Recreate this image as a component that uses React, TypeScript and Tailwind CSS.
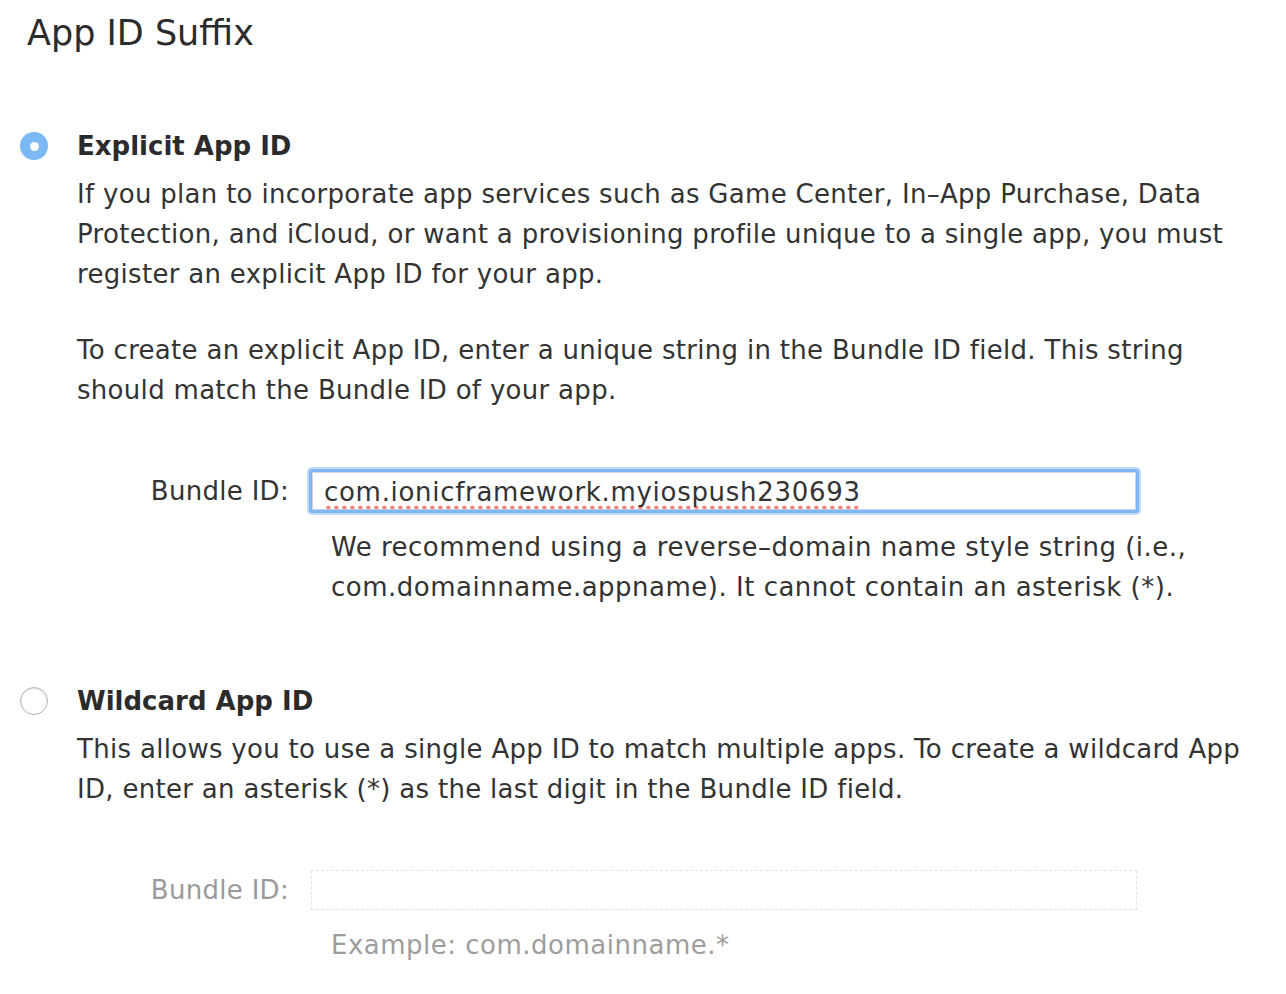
import React from "react";

export default function App() {
  return (
    <div className="w-[1286px] h-[994px] bg-white text-[#333333] overflow-hidden font-['DejaVu_Sans','Noto_Sans',sans-serif]">
      <div className="pl-[27px] pt-[10px] text-[35px] leading-[46px] text-[#2b2b2b]">App ID Suffix</div>

      {/* Explicit */}
      <div className="mt-[70px] flex">
        <div className="w-[77px] shrink-0 flex pl-[20px] pt-[6px]">
          <div className="w-[28px] h-[28px] rounded-full bg-[#7ab8f6] flex items-center justify-center">
            <div className="w-[9px] h-[9px] rounded-full bg-white" />
          </div>
        </div>
        <div className="w-[1170px] text-[26px] leading-[40px] tracking-[0.3px]">
          <div className="font-bold text-[#2b2b2b] tracking-normal mb-[8px]">Explicit App ID</div>
          <p>If you plan to incorporate app services such as Game Center, In–App Purchase, Data Protection, and iCloud, or want a provisioning profile unique to a single app, you must register an explicit App ID for your app.</p>
          <p className="mt-[36px]">To create an explicit App ID, enter a unique string in the Bundle ID field. This string should match the Bundle ID of your app.</p>
        </div>
      </div>

      <div className="mt-[57px] flex items-center text-[26px] tracking-[0.3px]">
        <div className="w-[289px] shrink-0 text-right text-[#333]">Bundle ID:</div>
        <div className="ml-[18px] w-[834px] h-[48px] rounded-[5px] bg-[#c3dbf2] p-[2px]">
          <div className="w-full h-full rounded-[3px] bg-[#7fb7f4] p-[3px]">
            <div className="w-full h-full bg-white border border-[#c9d6e4] flex items-center pl-[11px] pt-[5px]">
              <span className="tracking-[0.7px] leading-[30px] pb-[3px] bg-[radial-gradient(circle,#f3807a_1.7px,transparent_2.2px)] bg-[length:8px_5px] bg-repeat-x bg-bottom">com.ionicframework.myiospush230693</span>
            </div>
          </div>
        </div>
      </div>
      <div className="mt-[12px] pl-[331px] pr-[40px] text-[26px] leading-[40px] tracking-[0.5px]">
        We recommend using a reverse–domain name style string (i.e., com.domainname.appname). It cannot contain an asterisk (*).
      </div>

      {/* Wildcard */}
      <div className="mt-[74px] flex">
        <div className="w-[77px] shrink-0 flex pl-[20px] pt-[6px]">
          <div className="w-[28px] h-[28px] rounded-full bg-white border border-[#b5b5b5] shadow-[inset_0_1px_2px_rgba(0,0,0,0.12)]" />
        </div>
        <div className="w-[1170px] text-[26px] leading-[40px] tracking-[0.3px]">
          <div className="font-bold text-[#2b2b2b] tracking-normal mb-[8px]">Wildcard App ID</div>
          <p>This allows you to use a single App ID to match multiple apps. To create a wildcard App ID, enter an asterisk (*) as the last digit in the Bundle ID field.</p>
        </div>
      </div>

      <div className="mt-[61px] flex items-center text-[26px] tracking-[0.3px]">
        <div className="w-[289px] shrink-0 text-right text-[#9a9a9a]">Bundle ID:</div>
        <div className="ml-[22px] w-[826px] h-[40px] border border-dashed border-[#e2e2e2]" />
      </div>
      <div className="mt-[15px] pl-[331px] text-[26px] leading-[40px] tracking-[0.5px] text-[#9d9d9d]">
        Example: com.domainname.*
      </div>
    </div>
  );
}
